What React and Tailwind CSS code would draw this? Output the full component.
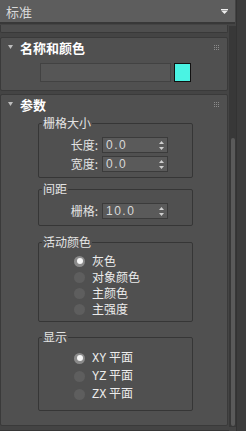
import React from 'react';

const font = { fontFamily: '"Noto Sans CJK SC", "Noto Sans", sans-serif' };

/* small down triangle used in rollout headers */
const Caret = () => (
  <svg width="5" height="4" viewBox="0 0 5 4" className="shrink-0">
    <path d="M0 0H5L2.5 4Z" fill="#bdbdbd" />
  </svg>
);

/* 3x3 dotted grip at the right of a rollout header */
const Grip = () => (
  <svg width="5" height="5" viewBox="0 0 5 5" className="ml-auto shrink-0">
    {[0, 2, 4].map((y) =>
      [0, 2, 4].map((x) => <rect key={`${x}-${y}`} x={x} y={y} width="1" height="1" fill="#8c8c8c" />)
    )}
  </svg>
);

const SpinArrows = () => (
  <svg width="5" height="9" viewBox="0 0 5 9" className="shrink-0">
    <path d="M2.5 0L5 3H0Z" fill="#cfcfcf" />
    <path d="M0 6H5L2.5 9Z" fill="#cfcfcf" />
  </svg>
);

const Spinner = ({ value }) => (
  <div className="ml-[4px] flex h-[16px] w-[66px] items-center border border-[#3b3b3b] bg-[#5a5a5a] pl-[3px] pr-[3px]">
    <span className="flex-1 text-[12px] leading-none tracking-[1.5px] text-[#d8d8d8]" style={{ fontFamily: '"Liberation Sans", sans-serif' }}>
      {value}
    </span>
    <SpinArrows />
  </div>
);

const SpinRow = ({ label, value, className = '' }) => (
  <div className={`flex items-center ${className}`}>
    <span className="w-[59px] text-right text-[12px] leading-none text-[#e2e2e2]">{label}</span>
    <Spinner value={value} />
  </div>
);

const Radio = ({ label, checked, rowH }) => (
  <div className={`flex items-center pl-[35px] ${rowH}`}>
    <span
      className={`flex h-[11px] w-[11px] shrink-0 items-center justify-center rounded-full ${
        checked ? 'bg-[#8a8a8a]' : 'bg-[#5e5e5e]'
      }`}
    >
      {checked && <span className="h-[6px] w-[6px] rounded-full bg-[#f6f6f6]" />}
    </span>
    <span className="ml-[7px] text-[12px] leading-none text-[#ececec]">{label}</span>
  </div>
);

const Group = ({ title, className = '', children }) => (
  <fieldset className={`ml-[37px] w-[155px] rounded-[2px] border border-[#363636] ${className}`}>
    <legend className="ml-[3px] px-[1px] text-[12px] leading-[14px] text-[#e4e4e4]">{title}</legend>
    {children}
  </fieldset>
);

const Header = ({ title }) => (
  <div className="flex h-[18px] items-center pl-[7px] pr-[8px]">
    <Caret />
    <span className="ml-[7px] text-[13px] font-bold leading-none text-white">{title}</span>
    <Grip />
  </div>
);

const Axis = ({ children }) => (
  <>
    <span style={{ fontFamily: '"Liberation Mono", monospace' }}>{children}</span> 平面
  </>
);

export default function App() {
  return (
    <div className="flex h-[431px] w-[246px] bg-[#444444]" style={font}>
      <div className="flex w-[236px] flex-col">
        {/* preset dropdown */}
        <div className="flex h-[24px] w-[235px] items-center border-b-2 border-[#383838] bg-[#5d5d5d] pl-[6px] pr-[7px]">
          <span className="text-[13px] leading-none text-[#d9d9d9]">标准</span>
          <svg width="7" height="5" viewBox="0 0 7 5" className="ml-auto">
            <rect x="0" y="0" width="7" height="1" fill="#ededed" />
            <path d="M0 1.5H7L3.5 5Z" fill="#ededed" />
          </svg>
        </div>

        <div className="flex flex-1">
          {/* rollouts */}
          <div className="flex w-[229px] flex-col border-b border-[#363636] pb-[4px]">
            <div className="mt-[1px] h-[8px] w-[228px] rounded-b-[2px] border border-t-0 border-[#393939] bg-[#4e4e4e]" />

            <div className="mt-[4px] w-[228px] rounded-[2px] border border-[#3a3a3a] bg-[#505050] pb-[8px]">
              <Header title="名称和颜色" />
              <div className="mt-[7px] flex pl-[39px]">
                <div className="h-[19px] w-[131px] border border-[#424242] bg-[#565656]" />
                <div className="ml-[3px] h-[19px] w-[17px] border border-[#111] bg-[#4af3e3]" />
              </div>
            </div>

            <div className="mt-[3px] w-[228px] flex-1 rounded-[2px] border border-[#3a3a3a] bg-[#505050]">
              <Header title="参数" />

              <Group title="栅格大小" className="mt-[3px] pb-[5px] pt-[7px]">
                <SpinRow label="长度:" value="0.0" />
                <SpinRow label="宽度:" value="0.0" className="mt-[3px]" />
              </Group>

              <Group title="间距" className="mt-[4px] pb-[6px] pt-[7px]">
                <SpinRow label="栅格:" value="10.0" />
              </Group>

              <Group title="活动颜色" className="mt-[9px] pb-[4px] pt-[4px]">
                <Radio label="灰色" checked rowH="h-[16px]" />
                <Radio label="对象颜色" rowH="h-[16px]" />
                <Radio label="主颜色" rowH="h-[16px]" />
                <Radio label="主强度" rowH="h-[16px]" />
              </Group>

              <Group title="显示" className="mt-[8px] pb-[7px] pt-[5px]">
                <Radio label={<Axis>XY</Axis>} checked rowH="h-[18px]" />
                <Radio label={<Axis>YZ</Axis>} rowH="h-[18px]" />
                <Radio label={<Axis>ZX</Axis>} rowH="h-[18px]" />
              </Group>
            </div>
          </div>

          {/* scrollbar */}
          <div className="mt-[2px] mb-[4px] flex w-[7px] flex-col bg-[#383838] pl-[2px] pr-[1px]">
            <div className="mt-[112px] mb-[1px] flex-1 rounded-[2px] bg-[#5a5a5a]" />
          </div>
        </div>
      </div>
      <div className="w-[10px] border-l border-[#333333] bg-[#3c3c3c]" />
    </div>
  );
}
